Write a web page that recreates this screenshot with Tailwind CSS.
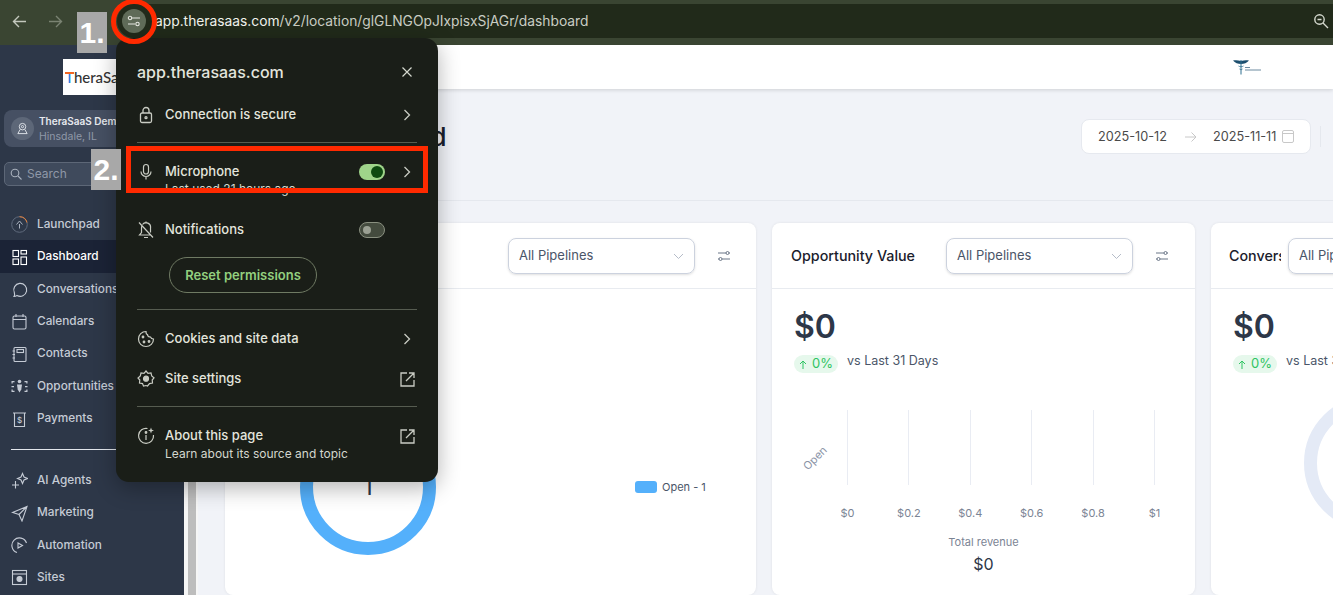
<!DOCTYPE html>
<html lang="en">
<head>
    <meta charset="UTF-8">
    <meta name="viewport" content="width=device-width, initial-scale=1.0">
    <title>Dashboard</title>
    <script src="https://cdn.jsdelivr.net/npm/@tailwindcss/browser@4"></script>
</head>
<body class="relative w-[1333px] h-[595px] overflow-hidden bg-white [font-family:Inter,sans-serif]">

    <!-- browser toolbar -->
    <div class="h-[45px] bg-[#3a4532] pt-1 flex items-start">
        <div class="w-[117px] h-[34px] flex items-center text-[#c3c8bd]">
            <svg class="ml-3 w-[15px] h-[15px]" viewBox="0 0 15 15" fill="none" stroke="currentColor" stroke-width="1.4"><path d="M14 7.5H1.5M7 2 1.5 7.5 7 13"/></svg>
            <svg class="ml-[21px] w-[15px] h-[15px] text-[#7a8372]" viewBox="0 0 15 15" fill="none" stroke="currentColor" stroke-width="1.4"><path d="M1 7.5h12.5M8 2l5.5 5.5L8 13"/></svg>
        </div>
        <div class="flex-1 h-[34px] bg-[#212a1a] rounded-l-[17px] flex items-center pl-[38px] pr-[4px] text-[13.8px] text-[#c9cdc3]">
            <span class="text-[#f0f2ec]">app.therasaas.com</span><span>/v2/location/glGLNGOpJIxpisxSjAGr/dashboard</span>
            <svg class="ml-auto w-[16px] h-[16px] text-[#d5d9cf]" viewBox="0 0 16 16" fill="none" stroke="currentColor" stroke-width="1.4"><circle cx="6.5" cy="6.5" r="4.7"/><path d="M4.5 6.5h4M10 10l5 5"/></svg>
        </div>
    </div>

    <div class="flex h-[550px]">
        <!-- sidebar -->
        <aside class="w-[184px] shrink-0 bg-[#2d3748] text-[#c5cbd5] text-[11.8px] font-medium overflow-hidden">
            <div class="mt-[14px] ml-[63px] w-[100px] h-9 bg-white flex items-center pl-[2px] relative text-[15px] text-[#333] [font-family:Lato,sans-serif]">
                <span class="absolute left-[2px] top-[13px] w-[9px] h-[2px] bg-[#f26522]"></span>
                <span class="text-[#2a7de1]">T</span>heraSaaS
            </div>
            <div class="mt-[15px] ml-1 w-[170px] h-[37px] rounded-lg bg-[#465063] flex items-center pl-[7px] gap-[5px]">
                <div class="w-[23px] h-[23px] rounded-full bg-[#5d6778] flex items-center justify-center">
                    <svg class="w-[13px] h-[13px]" viewBox="0 0 14 14" fill="none" stroke="#e2e6ec" stroke-width="1"><circle cx="7" cy="5" r="3.5"/><circle cx="7" cy="5" r="1.2"/><path d="M4.5 8 2 12.5h10L9.500 8"/></svg>
                </div>
                <div class="leading-[15px]">
                    <div class="text-[10px] font-semibold text-[#e6e9ee] whitespace-nowrap">TheraSaaS Demo</div>
                    <div class="text-[10.5px] font-normal text-[#8f98a8]">Hinsdale, IL</div>
                </div>
            </div>
            <div class="mt-[15px] ml-1 w-[170px] h-6 rounded-[5px] border border-[#5d6777] bg-[#3f4a5c] flex items-center pl-[5px] gap-[5px] text-[12px] font-normal text-[#8f98a8]">
                <svg class="w-[12px] h-[12px]" viewBox="0 0 12 12" fill="none" stroke="#a9b1bd" stroke-width="1.1"><circle cx="5" cy="5" r="3.8"/><path d="m8 8 3.500 3.500"/></svg>
                Search
            </div>
            <nav class="mt-[22px]">
                <div class="h-[32.4px] flex items-center pt-px pl-[11px] gap-[9px]">
                    <svg class="w-[17px] h-[17px]" viewBox="0 0 17 17" fill="none" stroke="#aab2bf" stroke-width="1"><circle cx="8.500" cy="8.500" r="7.800" stroke="#5f6a7c"/><path d="M8.500.7a7.800 7.800 0 0 1 7.500 5.800" stroke="#e8823a"/><path d="M8.500 12.500V8M5.500 8.500l3-3.500 3 3.500"/></svg>
                    Launchpad
                </div>
                <div class="h-[32.4px] flex items-center pt-px pl-[11px] gap-[9px] bg-[#1b2336] text-white">
                    <svg class="w-[17px] h-[17px]" viewBox="0 0 17 17" fill="none" stroke="#fff" stroke-width="1.1"><rect x="2" y="1.500" width="5.500" height="6"/><rect x="10" y="1.500" width="5.500" height="3.500"/><rect x="2" y="10" width="5.500" height="5.500"/><rect x="10" y="8" width="5.500" height="7.500"/></svg>
                    Dashboard
                </div>
                <div class="h-[32.4px] flex items-center pt-px pl-[11px] gap-[9px]">
                    <svg class="w-[17px] h-[17px]" viewBox="0 0 17 17" fill="none" stroke="#c5cbd5" stroke-width="1.1"><path d="M3 15.500c1-1.500.8-2.500.3-4A6.500 6.500 0 1 1 6 14.500c-1 .6-2 1-3 1Z"/></svg>
                    Conversations
                </div>
                <div class="h-[32.4px] flex items-center pt-px pl-[11px] gap-[9px]">
                    <svg class="w-[17px] h-[17px]" viewBox="0 0 17 17" fill="none" stroke="#c5cbd5" stroke-width="1.1"><rect x="2" y="3" width="13" height="13" rx="1.500"/><path d="M2 6.500h13M5 1v3M12 1v3"/></svg>
                    Calendars
                </div>
                <div class="h-[32.4px] flex items-center pt-px pl-[11px] gap-[9px]">
                    <svg class="w-[17px] h-[17px]" viewBox="0 0 17 17" fill="none" stroke="#c5cbd5" stroke-width="1.1"><rect x="3" y="1.500" width="12" height="14" rx="1"/><rect x="6" y="3.500" width="6.500" height="3"/><path d="M1.500 5H4M1.500 8.500H4M1.500 12H4"/></svg>
                    Contacts
                </div>
                <div class="h-[32.4px] flex items-center pt-px pl-[11px] gap-[9px]">
                    <svg class="w-[17px] h-[17px]" viewBox="0 0 17 17" fill="#c5cbd5"><circle cx="8.500" cy="3.500" r="1.800"/><path d="M6 6.500h5l-.7 5-1.800 3-1.800-3Z"/><path d="M.5 3h3v1.200H1.700v1.300H.5ZM16.500 3h-3v1.200h1.800v1.300h1.200ZM.5 14h3v-1.200H1.700v-1.300H.5ZM16.500 14h-3v-1.200h1.800v-1.300h1.200ZM.5 8h2.500v1.200H.5ZM14 8h2.500v1.200H14Z"/></svg>
                    Opportunities
                </div>
                <div class="h-[32.4px] flex items-center pt-px pl-[11px] gap-[9px]">
                    <svg class="w-[17px] h-[17px]" viewBox="0 0 17 17" fill="none" stroke="#c5cbd5" stroke-width="1.1"><path d="M2 2h13M3.500 2v13.500h10V2"/><text x="8.500" y="11.500" font-size="8" text-anchor="middle" fill="#c5cbd5" stroke="none">$</text></svg>
                    Payments
                </div>
            </nav>
            <div class="mt-[14.4px] ml-[11px] h-px bg-[#e2e6ec]"></div>
            <nav class="mt-[14px]">
                <div class="h-[32.4px] flex items-center pt-px pl-[11px] gap-[9px]">
                    <svg class="w-[17px] h-[17px]" viewBox="0 0 17 17" fill="none" stroke="#c5cbd5" stroke-width="1.1"><path d="M11.500 1.500 13 5l3.500 1.500L13 8l-1.500 3.500L10 8 6.500 6.500 10 5ZM4.500 9v7.500M1 13h7"/></svg>
                    AI Agents
                </div>
                <div class="h-[32.4px] flex items-center pt-px pl-[11px] gap-[9px]">
                    <svg class="w-[17px] h-[17px]" viewBox="0 0 17 17" fill="none" stroke="#c5cbd5" stroke-width="1.1"><path d="M1.500 7.500 16 1.500 11 16 8 9.500ZM8 9.500 16 1.500"/></svg>
                    Marketing
                </div>
                <div class="h-[32.4px] flex items-center pt-px pl-[11px] gap-[9px]">
                    <svg class="w-[17px] h-[17px]" viewBox="0 0 17 17" fill="none" stroke="#c5cbd5" stroke-width="1.1"><path d="M15.500 6A7.500 7.500 0 1 0 6 15.500"/><path d="M7 6v5l4.500-2.500Z"/></svg>
                    Automation
                </div>
                <div class="h-[32.4px] flex items-center pt-px pl-[11px] gap-[9px]">
                    <svg class="w-[17px] h-[17px]" viewBox="0 0 17 17" fill="none" stroke="#c5cbd5" stroke-width="1.1"><rect x="1.500" y="1.500" width="14" height="14"/><path d="M1.500 5h14"/><circle cx="8.500" cy="10" r="2.500" fill="#c5cbd5"/></svg>
                    Sites
                </div>
            </nav>
        </aside>

        <!-- page scrollbar -->
        <div class="w-[14px] shrink-0 flex bg-[#f6f6f6]">
            <div class="ml-1 w-2 bg-[#bdbdbd]"></div>
        </div>

        <!-- main -->
        <main class="flex-1 min-w-0 bg-[#f1f3f8] overflow-hidden">
            <header class="relative h-[44px] bg-white shadow-[0_1px_4px_rgba(0,0,0,0.15)] flex items-center pl-[1035px]">
                <svg class="w-[29px] h-[16px]" viewBox="0 0 29 16" fill="none">
                    <path d="M0 1.500c2.500-.5 5-.5 8 .5 3-1 5.500-1 8-.5-2 2.500-5 3.500-8 3.500S2 4 0 1.500Z" fill="#1c4e6e"/>
                    <path d="M8 1v14.500" stroke="#2f6f8f" stroke-width="1"/>
                    <path d="M5.500 7c1.500 1 3.500 1 5 0M6.500 10c1 .8 2.500 .8 3 0" stroke="#2f6f8f" stroke-width=".8"/>
                    <path d="M12 8.500h5M12 11h16" stroke="#6d8ba0" stroke-width="1"/>
                </svg>
            </header>
            <div class="h-[112px] ml-[27px] border-b border-[#e5e8ee] flex pt-[30px] items-start">
                <h1 class="ml-[86px] mt-[3px] w-[136px] text-[26px] leading-[30px] font-medium text-[#1a202c] whitespace-nowrap">Dashboard</h1>
                <div class="ml-[634px] w-[230px] h-[35px] rounded-lg bg-white border border-[#e6e9ef] flex items-center pl-4 text-[12.7px] text-[#4a4a4a]">
                    2025-10-12
                    <svg class="ml-[18px] w-[12px] h-[12px]" viewBox="0 0 12 12" fill="none" stroke="#c8c8c8"><path d="M0 6h11M6.500 1.500 11 6l-4.500 4.500"/></svg>
                    <span class="ml-[16px]">2025-11-11</span>
                    <svg class="ml-[6px] w-[12px] h-[13px]" viewBox="0 0 12 13" fill="none" stroke="#c8c8c8"><rect x=".5" y=".5" width="11" height="12" rx="1.500"/><path d="M.5 3.500h11"/></svg>
                </div>
                <div class="ml-[9px] mt-[7px] w-px h-[21px] bg-[#e5e8ee]"></div>
            </div>
            <div class="mt-[22px] ml-[27px] flex gap-4 w-[1200px]">
                <!-- status card -->
                <section class="w-[531px] shrink-0 h-[372px] rounded-lg bg-white shadow-[0_0_3px_rgba(0,0,0,0.08)]">
                    <div class="h-[66px] border-b border-[#e8ebf0] flex items-center">
                        <div class="ml-[283px] w-[187px] h-9 pt-px rounded-lg border border-[#ccd2de] shadow-sm flex items-center justify-between px-[10px] text-[13px] text-[#4a5568]">
                            All Pipelines
                            <svg class="w-[11px] h-[7px]" viewBox="0 0 11 7" fill="none" stroke="#b5bcc8"><path d="m1 1 4.500 4.500L10 1"/></svg>
                        </div>
                        <svg class="ml-[22px] w-[14px] h-[12px]" viewBox="0 0 14 12" fill="none" stroke="#6b7688"><path d="M1 3h8M13 3h-1M5 9h8M1 9h1"/><circle cx="10.500" cy="3" r="1.500"/><circle cx="3.500" cy="9" r="1.500"/></svg>
                    </div>
                    <div class="flex items-center pt-[130px]">
                        <div class="relative ml-[75px] w-[136px] h-[136px] flex items-center justify-center text-[24px] text-[#2d3748]">
                            <svg class="absolute inset-0" viewBox="0 0 136 136" fill="none"><circle cx="68" cy="68" r="61.500" stroke="#54b0fb" stroke-width="13"/></svg>
                            1
                        </div>
                        <span class="ml-[199px] w-[22px] h-3 rounded-[3px] bg-[#54b0fb]"></span>
                        <span class="ml-[5px] text-[11px] text-[#4a5568]">Open - 1</span>
                    </div>
                </section>

                <!-- value card -->
                <section class="w-[423px] shrink-0 h-[372px] rounded-lg bg-white shadow-[0_0_3px_rgba(0,0,0,0.08)]">
                    <div class="h-[66px] border-b border-[#e8ebf0] flex items-center pl-[19px]">
                        <h2 class="w-[155px] pt-px text-[14.3px] font-medium text-[#1a202c] whitespace-nowrap">Opportunity Value</h2>
                        <div class="w-[187px] h-9 pt-px rounded-lg border border-[#ccd2de] shadow-sm flex items-center justify-between px-[10px] text-[13px] text-[#4a5568]">
                            All Pipelines
                            <svg class="w-[11px] h-[7px]" viewBox="0 0 11 7" fill="none" stroke="#b5bcc8"><path d="m1 1 4.500 4.500L10 1"/></svg>
                        </div>
                        <svg class="ml-[22px] w-[14px] h-[12px]" viewBox="0 0 14 12" fill="none" stroke="#6b7688"><path d="M1 3h8M13 3h-1M5 9h8M1 9h1"/><circle cx="10.500" cy="3" r="1.500"/><circle cx="3.500" cy="9" r="1.500"/></svg>
                    </div>
                    <div class="mt-[18px] ml-[22px] h-10 text-[32px] leading-10 font-semibold text-[#2d3748]">$0</div>
                    <div class="mt-2 ml-[22px] flex items-start">
                        <span class="w-[44px] h-[18px] rounded-full bg-[#e6f8ec] flex items-center justify-center gap-[5px] text-[13px] text-[#2fc463]">
                            <svg class="w-[8px] h-[9px]" viewBox="0 0 8 9" fill="none" stroke="currentColor"><path d="M4 9V1M1 4l3-3 3 3"/></svg>0%
                        </span>
                        <span class="ml-[9px] -mt-[3px] text-[12.5px] leading-[18px] text-[#4a5568]">vs Last 31 Days</span>
                    </div>
                    <div class="mt-[37px] flex h-[75px]">
                        <div class="w-[75px] flex items-center justify-center pt-[21px] pl-[11px]">
                            <span class="-rotate-45 text-[11px] text-[#8a93a6]">Open</span>
                        </div>
                        <div class="w-[308px] flex justify-between">
                            <div class="w-px bg-[#e9ecf3]"></div>
                            <div class="w-px bg-[#e9ecf3]"></div>
                            <div class="w-px bg-[#e9ecf3]"></div>
                            <div class="w-px bg-[#e9ecf3]"></div>
                            <div class="w-px bg-[#e9ecf3]"></div>
                            <div class="w-px bg-[#e9ecf3]"></div>
                        </div>
                    </div>
                    <div class="mt-[20px] ml-[75px] w-[308px] flex justify-between text-[11px] text-[#7b8494] leading-4">
                        <div class="w-px flex justify-center">$0</div>
                        <div class="w-px flex justify-center">$0.2</div>
                        <div class="w-px flex justify-center">$0.4</div>
                        <div class="w-px flex justify-center">$0.6</div>
                        <div class="w-px flex justify-center">$0.8</div>
                        <div class="w-px flex justify-center">$1</div>
                    </div>
                    <div class="mt-[13px] text-center text-[11px] leading-4 text-[#7b8494]">Total revenue</div>
                    <div class="mt-1 text-center text-[16px] leading-5 text-[#2d3748]">$0</div>
                </section>

                <!-- conversion card -->
                <section class="w-[300px] shrink-0 h-[372px] rounded-lg bg-white shadow-[0_0_3px_rgba(0,0,0,0.08)] overflow-hidden">
                    <div class="h-[66px] border-b border-[#e8ebf0] flex items-center pl-[18px]">
                        <h2 class="w-[52px] pt-px overflow-hidden text-[14.3px] font-medium text-[#1a202c] whitespace-nowrap">Conversion</h2>
                        <div class="ml-[7px] w-[187px] h-9 pt-px shrink-0 rounded-lg border border-[#ccd2de] shadow-sm flex items-center px-[10px] text-[13px] text-[#4a5568]">All Pipelines</div>
                    </div>
                    <div class="mt-[18px] ml-[22px] h-10 text-[32px] leading-10 font-semibold text-[#2d3748]">$0</div>
                    <div class="mt-2 ml-[22px] flex items-start">
                        <span class="w-[44px] h-[18px] rounded-full bg-[#e6f8ec] flex items-center justify-center gap-[5px] text-[13px] text-[#2fc463]">
                            <svg class="w-[8px] h-[9px]" viewBox="0 0 8 9" fill="none" stroke="currentColor"><path d="M4 9V1M1 4l3-3 3 3"/></svg>0%
                        </span>
                        <span class="ml-[9px] -mt-[3px] text-[12.5px] leading-[18px] text-[#4a5568] whitespace-nowrap">vs Last 31 Days</span>
                    </div>
                    <svg class="ml-[93px] mt-[22px] w-[136px] h-[136px]" viewBox="0 0 136 136" fill="none"><circle cx="68" cy="68" r="61.500" stroke="#e4eaf6" stroke-width="13"/></svg>
                </section>
            </div>
        </main>
    </div>

    <!-- site info popup -->
    <div class="absolute left-[116px] top-[38px] w-[322px] h-[444px] rounded-[13px] bg-[#1a1e18] shadow-[0_6px_22px_rgba(0,0,0,0.3)] px-[21px] pt-[22px] text-[#e3e5dd] text-[13px] font-medium">
        <div class="h-6 flex items-center justify-between">
            <span class="text-[16px]">app.therasaas.com</span>
            <svg class="mr-[5px] w-[10px] h-[10px]" viewBox="0 0 10 10" fill="none" stroke="#d5d8ce" stroke-width="1.2"><path d="m.5.5 9 9M9.500.5l-9 9"/></svg>
        </div>
        <div class="mt-[11px] h-10 flex items-center">
            <svg class="w-[18px] h-[18px] mr-[10px]" viewBox="0 0 18 18" fill="none" stroke="#c9ccc3" stroke-width="1.3"><rect x="3.500" y="7" width="11" height="9.500" rx="1.500"/><path d="M6 7V4.500a3 3 0 0 1 6 0V7"/><circle cx="9" cy="11.700" r="1"/></svg>
            Connection is secure
            <svg class="ml-auto mr-[6px] w-[8px] h-[12px]" viewBox="0 0 8 12" fill="none" stroke="#c9ccc3" stroke-width="1.3"><path d="m1.500 1 5 5-5 5"/></svg>
        </div>
        <div class="mt-[7px] h-px bg-[#565c50]"></div>
        <div class="mt-[19px] h-5 flex items-center">
            <svg class="w-[18px] h-[18px] mr-[10px]" viewBox="0 0 18 18" fill="none" stroke="#c9ccc3" stroke-width="1.2"><rect x="6.500" y="1.500" width="5" height="9.500" rx="2.500"/><path d="M4 8.500a5 5 0 0 0 10 0M9 13.500v3"/></svg>
            Microphone
            <span class="ml-auto w-[26px] h-4 rounded-full bg-[#9fd48a] flex items-center justify-end pr-[2px]"><span class="w-3 h-3 rounded-full bg-[#0e4a10]"></span></span>
            <svg class="ml-[18px] mr-[6px] w-[8px] h-[12px]" viewBox="0 0 8 12" fill="none" stroke="#c9ccc3" stroke-width="1.3"><path d="m1.500 1 5 5-5 5"/></svg>
        </div>
        <div class="-mt-px h-4 pl-7 text-[12px] leading-4 font-normal text-[#d4d7ce]">Last used 21 hours ago</div>
        <div class="mt-[23px] h-5 flex items-center">
            <svg class="w-[18px] h-[18px] mr-[10px]" viewBox="0 0 18 18" fill="none" stroke="#c9ccc3" stroke-width="1.2"><path d="M5.500 3.500A4.500 4.500 0 0 1 13.500 7v4.500M13.500 14H2.500L4.500 11.500V7c0-.7.100-1.200.3-1.700M7 16.500h4M2 1.500 16 16.500M9 .5v2"/></svg>
            Notifications
            <span class="ml-auto mr-8 w-[26px] h-4 rounded-full bg-[#444b3e] border border-[#8a9080] flex items-center pl-[3px]"><span class="w-2 h-2 rounded-full bg-[#9ba093]"></span></span>
        </div>
        <div class="mt-[17px] ml-8 w-[148px] h-9 pt-[2px] rounded-full border border-[#6f7a63] flex items-center justify-center font-semibold text-[#93d07f]">Reset permissions</div>
        <div class="mt-4 h-px bg-[#565c50]"></div>
        <div class="mt-[19px] h-5 flex items-center">
            <svg class="w-[18px] h-[18px] mr-[10px]" viewBox="0 0 18 18" fill="none" stroke="#c9ccc3" stroke-width="1.2"><path d="M9 1.500a7.500 7.500 0 1 0 7.500 7.500c-1.500 0-2.500-.5-3-2-1.500 0-3-1-3-2.500-1 0-1.500-1.500-1.500-3Z"/><circle cx="6" cy="7" r=".8" fill="#c9ccc3"/><circle cx="7" cy="12" r=".8" fill="#c9ccc3"/><circle cx="12" cy="11.500" r=".8" fill="#c9ccc3"/></svg>
            Cookies and site data
            <svg class="ml-auto mr-[6px] w-[8px] h-[12px]" viewBox="0 0 8 12" fill="none" stroke="#c9ccc3" stroke-width="1.3"><path d="m1.500 1 5 5-5 5"/></svg>
        </div>
        <div class="mt-5 h-5 flex items-center">
            <svg class="w-[18px] h-[18px] mr-[10px]" viewBox="0 0 18 18" fill="none" stroke="#c9ccc3" stroke-width="1.2"><path d="m9 1 2 2.300 3-.4.700 3 2.300 2-1.800 2.100.3 3-3 .6L10.500 16 9 15.500 6.500 16l-1-2.400-3-.6.300-3L1 8l2.300-2 .7-3 3 .4Z"/><circle cx="9" cy="8.700" r="2.500" fill="#c9ccc3"/></svg>
            Site settings
            <svg class="ml-auto mr-[2px] w-[15px] h-[15px]" viewBox="0 0 15 15" fill="none" stroke="#c9ccc3" stroke-width="1.3"><path d="M7 1H1v13h13V8M9 1h5v5M14 1 6 9"/></svg>
        </div>
        <div class="mt-[17px] h-px bg-[#565c50]"></div>
        <div class="mt-[19px] h-5 flex items-center">
            <svg class="w-[18px] h-[18px] mr-[10px]" viewBox="0 0 18 18" fill="none" stroke="#c9ccc3" stroke-width="1.2"><path d="M10.500 1.500A7.500 7.500 0 1 0 16.500 8M9 8v5"/><circle cx="9" cy="5.500" r=".8" fill="#c9ccc3"/><path d="M14 0.500l.8 2.200 2.200.8-2.200.8-.8 2.200-.8-2.200-2.200-.8 2.200-.8Z" fill="#c9ccc3" stroke="none"/></svg>
            About this page
            <svg class="ml-auto mr-[2px] w-[15px] h-[15px]" viewBox="0 0 15 15" fill="none" stroke="#c9ccc3" stroke-width="1.3"><path d="M7 1H1v13h13V8M9 1h5v5M14 1 6 9"/></svg>
        </div>
        <div class="h-4 pl-7 text-[12px] leading-4 font-normal text-[#d4d7ce]">Learn about its source and topic</div>
    </div>

    <!-- tune button in the address bar, with the annotation ring -->
    <div class="absolute left-[122px] top-[9px] w-6 h-6 rounded-full bg-[#5f6b58] flex items-center justify-center">
        <svg class="w-[14px] h-[12px]" viewBox="0 0 14 12" fill="none" stroke="#e6e8e1" stroke-width="1.1"><circle cx="3" cy="3" r="1.700"/><path d="M5 3h8M1 9h7"/><circle cx="10.500" cy="9" r="1.700"/></svg>
    </div>
    <div class="absolute left-[111px] top-[-1px] w-[46px] h-[45px] rounded-full border-[5px] border-[#ff2a00]"></div>
    <div class="absolute left-[77px] top-[12px] w-[30px] h-[41px] bg-[#a8a8a8] flex items-center justify-center text-white text-[30px] font-bold [font-family:'Liberation_Sans',sans-serif]">1.</div>

    <!-- annotation box around the microphone row -->
    <div class="absolute left-[126px] top-[146px] w-[302px] h-[47px] border-[5px] border-[#ff2a00]"></div>
    <div class="absolute left-[91px] top-[149px] w-[30px] h-[41px] bg-[#a8a8a8] flex items-center justify-center text-white text-[30px] font-bold [font-family:'Liberation_Sans',sans-serif]">2.</div>
</body>
</html>
